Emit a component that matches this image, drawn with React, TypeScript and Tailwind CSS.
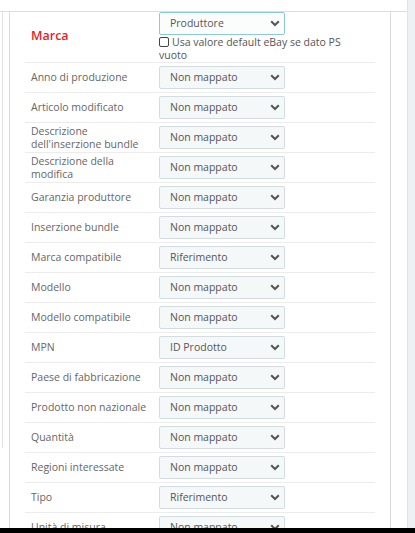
import React from "react";

const ROWS: { label: string; value: string }[] = [
  { label: "Anno di produzione", value: "Non mappato" },
  { label: "Articolo modificato", value: "Non mappato" },
  { label: "Descrizione dell'inserzione bundle", value: "Non mappato" },
  { label: "Descrizione della modifica", value: "Non mappato" },
  { label: "Garanzia produttore", value: "Non mappato" },
  { label: "Inserzione bundle", value: "Non mappato" },
  { label: "Marca compatibile", value: "Riferimento" },
  { label: "Modello", value: "Non mappato" },
  { label: "Modello compatibile", value: "Non mappato" },
  { label: "MPN", value: "ID Prodotto" },
  { label: "Paese di fabbricazione", value: "Non mappato" },
  { label: "Prodotto non nazionale", value: "Non mappato" },
  { label: "Quantità", value: "Non mappato" },
  { label: "Regioni interessate", value: "Non mappato" },
  { label: "Tipo", value: "Riferimento" },
  { label: "Unità di misura", value: "Non mappato" },
];

function Chevron() {
  return (
    <svg width="10" height="7" viewBox="0 0 10 7" className="shrink-0">
      <path d="M1.2 1.2 5 5 8.8 1.2" fill="none" stroke="#555" strokeWidth="2" />
    </svg>
  );
}

function FakeSelect({ value, focused }: { value: string; focused?: boolean }) {
  return (
    <div
      className={`w-[126px] h-[23px] flex items-center justify-between pl-[10px] pr-[4px] rounded-[2px] border text-[10.5px] text-[#555] ${
        focused ? "bg-[#fbfdfd] border-[#8cc9df]" : "bg-[#f5f8f9] border-[#d3dcdf]"
      }`}
    >
      <span>{value}</span>
      <Chevron />
    </div>
  );
}

export default function App() {
  return (
    <div
      className="w-[415px] h-[533px] overflow-hidden bg-white flex flex-col"
      style={{ fontFamily: '"Open Sans", "Noto Sans", sans-serif' }}
    >
      <div className="flex-1 flex overflow-hidden">
        <div className="w-[407px] pt-[11px] flex flex-col">
          <div className="flex-1 flex border-t border-[#dedede]">
            <div className="w-[9px] shrink-0 pl-[2px]">
              <div className="h-[436px] border-l border-[#e2e2e2]" />
            </div>
            <div className="w-[382px] shrink-0 border-l border-r border-[#dcdcdc] px-[15px]">
              <div className="h-[51px] flex border-b border-[#ececec]">
                <div className="w-[134px] shrink-0 pl-[6px] pt-[15px] text-[12.5px] font-semibold text-[#e3222b]">
                  Marca
                </div>
                <div className="flex flex-col">
                  <FakeSelect value="Produttore" focused />
                  <label className="w-[196px] text-[10.5px] leading-[13px] text-[#555] mt-[1px]">
                    <span className="inline-block w-[10px] h-[10px] mr-[3px] border border-[#444] rounded-[2px] bg-white align-[-1px]" />
                    Usa valore default eBay se dato PS vuoto
                  </label>
                </div>
              </div>
              {ROWS.map((row) => (
                <div
                  key={row.label}
                  className="min-h-[30px] flex items-center border-b border-[#ececec]"
                >
                  <div className="w-[134px] shrink-0 pl-[6px] pr-[6px] text-[10.5px] leading-[13px] text-[#666]">
                    {row.label}
                  </div>
                  <div className="py-[3px]">
                    <FakeSelect value={row.value} />
                  </div>
                </div>
              ))}
            </div>
          </div>
        </div>
        <div className="flex-1 bg-[#eff0f2] border-l border-[#e4e4e4]" />
      </div>
      <div className="h-[5px] bg-black shrink-0" />
    </div>
  );
}
